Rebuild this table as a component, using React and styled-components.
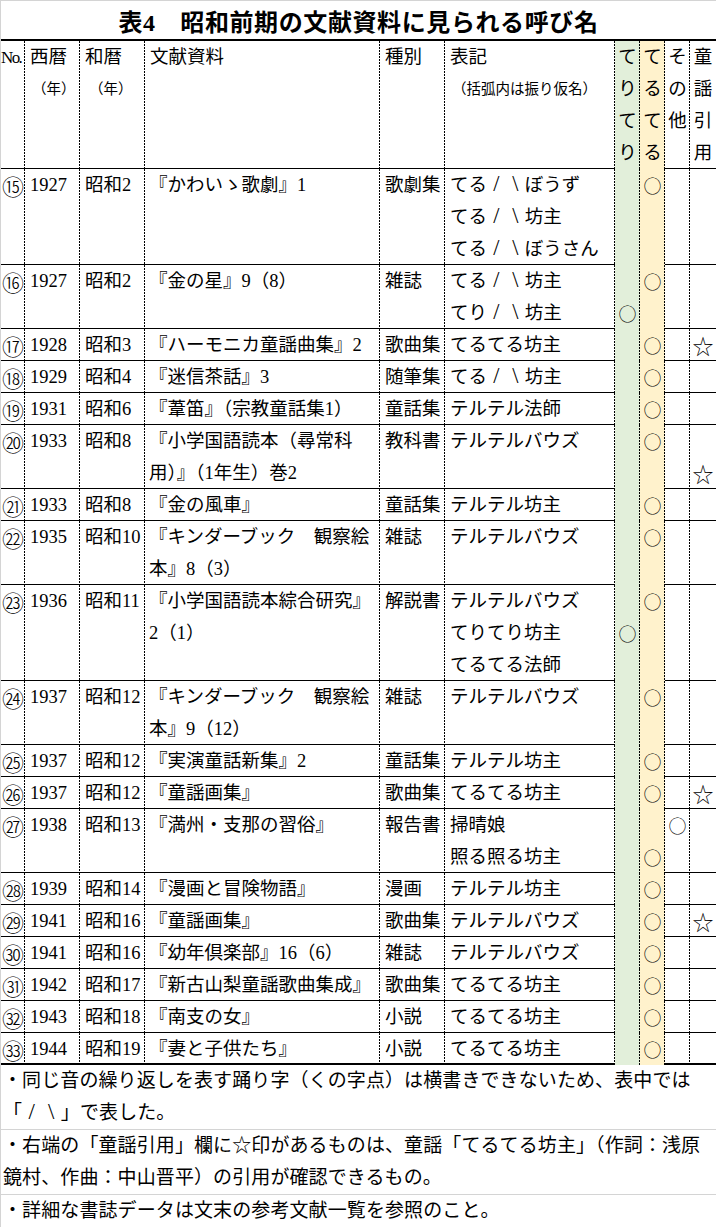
import React from "react";
import styled, { createGlobalStyle } from "styled-components";

const GlobalStyle = createGlobalStyle`
  html, body {
    margin: 0;
    padding: 0;
    background: #ffffff;
  }
  body {
    font-family: "Liberation Serif", "Noto Sans CJK JP", serif;
    color: #000;
  }
`;

const COLS = "24px 55px 65px 235px 65px 170px 25px 25px 25px 26px";
const GREEN = "#e2efda";
const YELLOW = "#fff2cc";

const Page = styled.div`
  width: 715px;
  border-left: 1px solid #d4d4d4;
  border-top: 1px solid #d4d4d4;
`;

const Title = styled.div`
  height: 38px;
  display: flex;
  align-items: center;
  justify-content: center;
  font-family: "Liberation Serif", "Noto Sans CJK JP", serif;
  font-weight: 700;
  font-size: 24px;
  letter-spacing: 0.6px;
  border-bottom: 2px solid #000;
`;

const Row = styled.div`
  display: grid;
  grid-template-columns: ${COLS};
  height: ${(p) => p.$lines * 32}px;
  box-sizing: border-box;
  border-bottom: ${(p) => (p.$last ? "2px" : "1px")} solid #000;
`;

const Cell = styled.div`
  font-size: 18.5px;
  line-height: 32px;
  padding-left: ${(p) => (p.$pad ?? 5)}px;
  text-align: ${(p) => (p.$center ? "center" : "left")};
  white-space: nowrap;
  overflow: visible;
  background-color: ${(p) => p.$fill || "transparent"};
  background-image: ${(p) =>
    p.$edge ? "none" : "linear-gradient(#000 2px, transparent 2px)"};
  background-size: 1px 3px;
  background-position: right top;
  background-repeat: repeat-y;
`;

const NoCell = styled(Cell)`
  font-family: "Noto Sans CJK JP", sans-serif;
  font-weight: 300;
  font-size: 22px;
`;

const NoMark = styled.span`
  font-family: "Liberation Serif", serif;
  font-weight: 400;
  font-size: 17px;
  letter-spacing: -1.6px;
  margin-left: -2px;
`;

const Sub = styled.div`
  font-size: 14.5px;
  padding-left: ${(p) => p.$indent || 0}px;
`;

const Line = styled.div`
  height: 32px;
`;

const Mark = styled.span`
  font-family: "Noto Sans CJK JP", sans-serif;
  font-weight: 300;
  font-size: ${(p) => (p.$star ? 21 : 18)}px;
`;

/* くの字点: a short slash and backslash, each one em wide */
const Kuno = styled.span`
  display: inline-block;
  width: 0.85em;
  text-align: center;
  font-family: "Liberation Serif", serif;
  font-size: 1.2em;
  line-height: 1;
`;

const Notes = styled.div`
  display: flex;
  flex-direction: column;
`;

const Note = styled.div`
  font-size: 19px;
  line-height: 32px;
  padding-left: 2px;
  white-space: nowrap;
  border-bottom: 1px solid #d4d4d4;
  letter-spacing: 0.1px;
`;

const K = () => (
  <>
    <Kuno>/</Kuno>
    <Kuno>\</Kuno>
  </>
);

const rows = [
  { no: "⑮", y: "1927", w: "昭和2", src: ["『かわいゝ歌劇』1"], kind: "歌劇集", names: [<>てる<K />ぼうず</>, <>てる<K />坊主</>, <>てる<K />ぼうさん</>], teru: [0] },
  { no: "⑯", y: "1927", w: "昭和2", src: ["『金の星』9（8）"], kind: "雑誌", names: [<>てる<K />坊主</>, <>てり<K />坊主</>], teru: [0], teri: [1] },
  { no: "⑰", y: "1928", w: "昭和3", src: ["『ハーモニカ童謡曲集』2"], kind: "歌曲集", names: ["てるてる坊主"], teru: [0], star: [0] },
  { no: "⑱", y: "1929", w: "昭和4", src: ["『迷信茶話』3"], kind: "随筆集", names: [<>てる<K />坊主</>], teru: [0] },
  { no: "⑲", y: "1931", w: "昭和6", src: ["『葦笛』（宗教童話集1）"], kind: "童話集", names: ["テルテル法師"], teru: [0] },
  { no: "⑳", y: "1933", w: "昭和8", src: ["『小学国語読本（尋常科", "用）』（1年生）巻2"], kind: "教科書", names: ["テルテルバウズ"], teru: [0], star: [1] },
  { no: "㉑", y: "1933", w: "昭和8", src: ["『金の風車』"], kind: "童話集", names: ["テルテル坊主"], teru: [0] },
  { no: "㉒", y: "1935", w: "昭和10", src: ["『キンダーブック　観察絵", "本』8（3）"], kind: "雑誌", names: ["テルテルバウズ"], teru: [0] },
  { no: "㉓", y: "1936", w: "昭和11", src: ["『小学国語読本綜合研究』", "2（1）"], kind: "解説書", names: ["テルテルバウズ", "てりてり坊主", "てるてる法師"], teru: [0], teri: [1] },
  { no: "㉔", y: "1937", w: "昭和12", src: ["『キンダーブック　観察絵", "本』9（12）"], kind: "雑誌", names: ["テルテルバウズ"], teru: [0] },
  { no: "㉕", y: "1937", w: "昭和12", src: ["『実演童話新集』2"], kind: "童話集", names: ["テルテル坊主"], teru: [0] },
  { no: "㉖", y: "1937", w: "昭和12", src: ["『童謡画集』"], kind: "歌曲集", names: ["てるてる坊主"], teru: [0], star: [0] },
  { no: "㉗", y: "1938", w: "昭和13", src: ["『満州・支那の習俗』"], kind: "報告書", names: ["掃晴娘", "照る照る坊主"], other: [0], teru: [1] },
  { no: "㉘", y: "1939", w: "昭和14", src: ["『漫画と冒険物語』"], kind: "漫画", names: ["テルテル坊主"], teru: [0] },
  { no: "㉙", y: "1941", w: "昭和16", src: ["『童謡画集』"], kind: "歌曲集", names: ["テルテルバウズ"], teru: [0], star: [0] },
  { no: "㉚", y: "1941", w: "昭和16", src: ["『幼年倶楽部』16（6）"], kind: "雑誌", names: ["テルテルバウズ"], teru: [0] },
  { no: "㉛", y: "1942", w: "昭和17", src: ["『新古山梨童謡歌曲集成』"], kind: "歌曲集", names: ["てるてる坊主"], teru: [0] },
  { no: "㉜", y: "1943", w: "昭和18", src: ["『南支の女』"], kind: "小説", names: ["てるてる坊主"], teru: [0] },
  { no: "㉝", y: "1944", w: "昭和19", src: ["『妻と子供たち』"], kind: "小説", names: ["てるてる坊主"], teru: [0] },
];

const Marks = ({ lines, at = [], glyph }) => (
  <>
    {Array.from({ length: lines }).map((_, i) => (
      <Line key={i}>
        {at.includes(i) ? <Mark $star={glyph === "☆"}>{glyph}</Mark> : ""}
      </Line>
    ))}
  </>
);

const Stack = ({ items }) => (
  <>
    {items.map((t, i) => (
      <Line key={i}>{t}</Line>
    ))}
  </>
);

const HeaderRow = () => (
  <Row $lines={4}>
    <Cell $pad={2}>
      <NoMark>No.</NoMark>
    </Cell>
    <Cell>
      西暦
      <Sub $indent={2}>（年）</Sub>
    </Cell>
    <Cell>
      和暦
      <Sub $indent={4}>（年）</Sub>
    </Cell>
    <Cell>文献資料</Cell>
    <Cell>種別</Cell>
    <Cell>
      表記
      <Sub $indent={2}>（括弧内は振り仮名）</Sub>
    </Cell>
    <Cell $pad={0} $center $fill={GREEN}>
      <Stack items={["て", "り", "て", "り"]} />
    </Cell>
    <Cell $pad={0} $center $fill={YELLOW}>
      <Stack items={["て", "る", "て", "る"]} />
    </Cell>
    <Cell $pad={0} $center>
      <Stack items={["そ", "の", "他"]} />
    </Cell>
    <Cell $pad={0} $center $edge>
      <Stack items={["童", "謡", "引", "用"]} />
    </Cell>
  </Row>
);

const DataRow = ({ r, last }) => {
  const lines = Math.max(r.src.length, r.names.length);
  return (
    <Row $lines={lines} $last={last}>
      <NoCell $pad={1}>{r.no}</NoCell>
      <Cell>{r.y}</Cell>
      <Cell>{r.w}</Cell>
      <Cell $pad={4}>
        <Stack items={r.src} />
      </Cell>
      <Cell>{r.kind}</Cell>
      <Cell>
        <Stack items={r.names} />
      </Cell>
      <Cell $pad={0} $center $fill={GREEN}>
        <Marks lines={lines} at={r.teri} glyph="○" />
      </Cell>
      <Cell $pad={0} $center $fill={YELLOW}>
        <Marks lines={lines} at={r.teru} glyph="○" />
      </Cell>
      <Cell $pad={0} $center>
        <Marks lines={lines} at={r.other} glyph="○" />
      </Cell>
      <Cell $pad={0} $center $edge>
        <Marks lines={lines} at={r.star} glyph="☆" />
      </Cell>
    </Row>
  );
};

export default function App() {
  return (
    <>
      <GlobalStyle />
      <Page>
        <Title>表4　昭和前期の文献資料に見られる呼び名</Title>
        <HeaderRow />
        {rows.map((r, i) => (
          <DataRow key={r.no} r={r} last={i === rows.length - 1} />
        ))}
        <Notes>
          <Note>
            ・同じ音の繰り返しを表す踊り字（くの字点）は横書きできないため、表中では
            <br />
            「<K />」で表した。
          </Note>
          <Note>
            ・右端の「童謡引用」欄に☆印があるものは、童謡「てるてる坊主」（作詞：浅原
            <br />
            鏡村、作曲：中山晋平）の引用が確認できるもの。
          </Note>
          <Note>・詳細な書誌データは文末の参考文献一覧を参照のこと。</Note>
        </Notes>
      </Page>
    </>
  );
}
